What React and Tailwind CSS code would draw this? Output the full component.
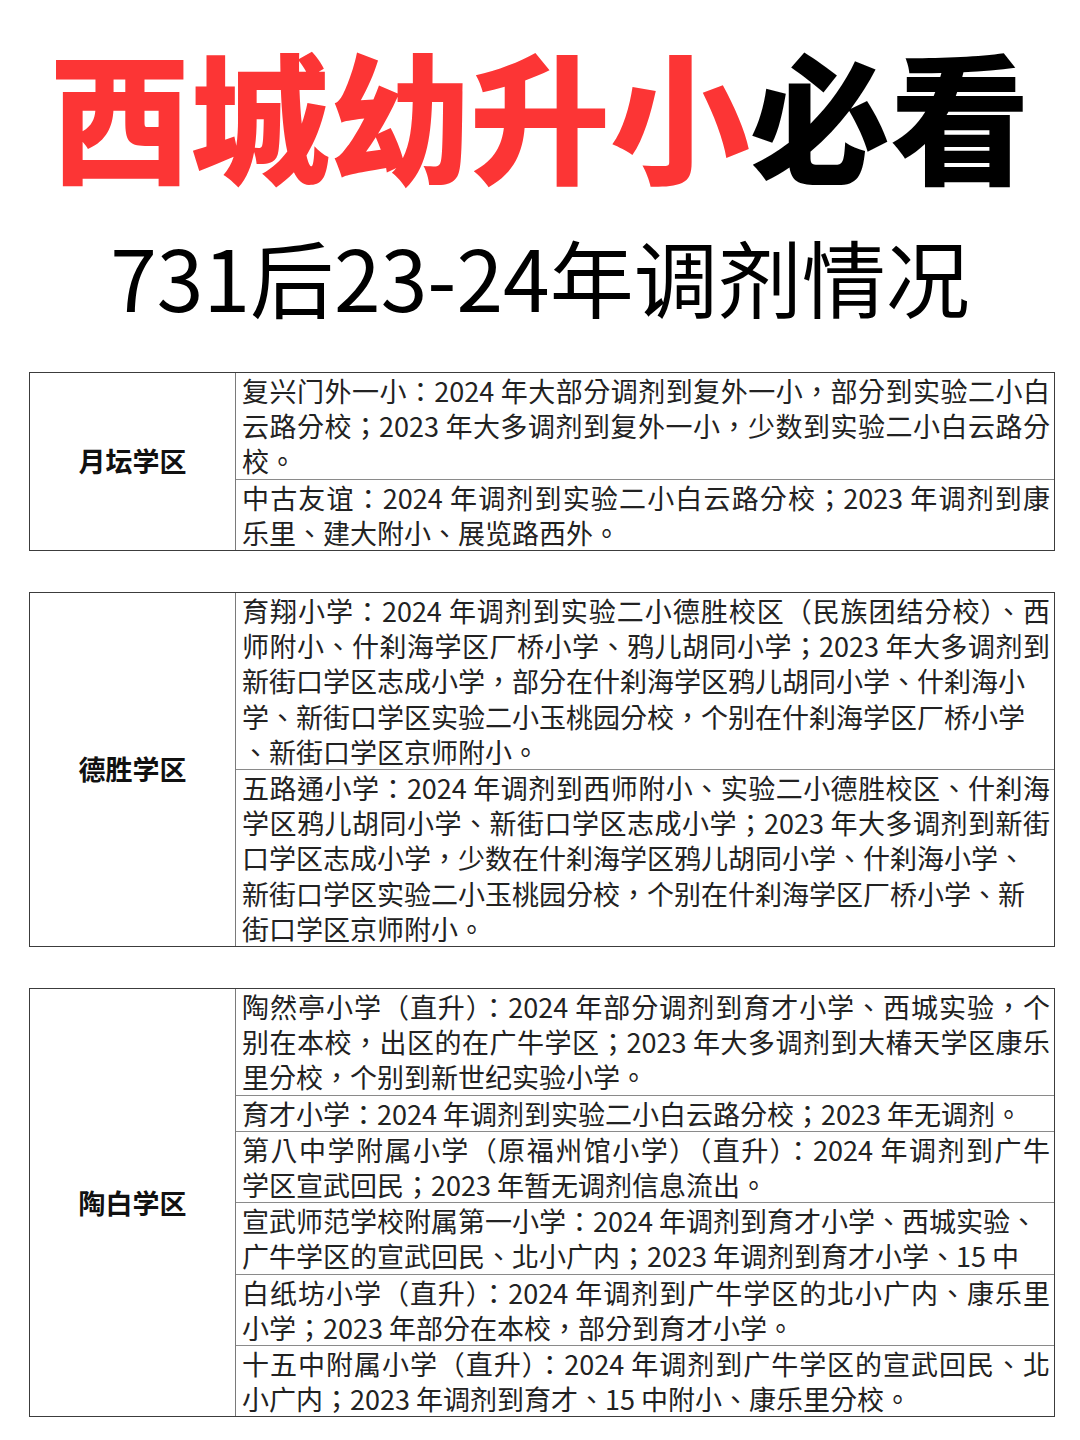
const districts = [
  {
    name: '月坛学区',
    rows: [
      [
        ['复兴门外一小：2024 年大部分调剂到复外一小，部分到实验二小白', true],
        ['云路分校；2023 年大多调剂到复外一小，少数到实验二小白云路分', true],
        ['校。', false],
      ],
      [
        ['中古友谊：2024 年调剂到实验二小白云路分校；2023 年调剂到康', true],
        ['乐里、建大附小、展览路西外。', false],
      ],
    ],
  },
  {
    name: '德胜学区',
    rows: [
      [
        ['育翔小学：2024 年调剂到实验二小德胜校区（民族团结分校）、西', true],
        ['师附小、什刹海学区厂桥小学、鸦儿胡同小学；2023 年大多调剂到', true],
        ['新街口学区志成小学，部分在什刹海学区鸦儿胡同小学、什刹海小', false],
        ['学、新街口学区实验二小玉桃园分校，个别在什刹海学区厂桥小学', false],
        ['、新街口学区京师附小。', false],
      ],
      [
        ['五路通小学：2024 年调剂到西师附小、实验二小德胜校区、什刹海', true],
        ['学区鸦儿胡同小学、新街口学区志成小学；2023 年大多调剂到新街', true],
        ['口学区志成小学，少数在什刹海学区鸦儿胡同小学、什刹海小学、', false],
        ['新街口学区实验二小玉桃园分校，个别在什刹海学区厂桥小学、新', false],
        ['街口学区京师附小。', false],
      ],
    ],
  },
  {
    name: '陶白学区',
    rows: [
      [
        ['陶然亭小学（直升）：2024 年部分调剂到育才小学、西城实验，个', true],
        ['别在本校，出区的在广牛学区；2023 年大多调剂到大椿天学区康乐', true],
        ['里分校，个别到新世纪实验小学。', false],
      ],
      [['育才小学：2024 年调剂到实验二小白云路分校；2023 年无调剂。', false]],
      [
        ['第八中学附属小学（原福州馆小学）（直升）：2024 年调剂到广牛', true],
        ['学区宣武回民；2023 年暂无调剂信息流出。', false],
      ],
      [
        ['宣武师范学校附属第一小学：2024 年调剂到育才小学、西城实验、', false],
        ['广牛学区的宣武回民、北小广内；2023 年调剂到育才小学、15 中', false],
      ],
      [
        ['白纸坊小学（直升）：2024 年调剂到广牛学区的北小广内、康乐里', true],
        ['小学；2023 年部分在本校，部分到育才小学。', false],
      ],
      [
        ['十五中附属小学（直升）：2024 年调剂到广牛学区的宣武回民、北', true],
        ['小广内；2023 年调剂到育才、15 中附小、康乐里分校。', false],
      ],
    ],
  },
]

function DistrictTable({ district }) {
  return (
    <div className="grid grid-cols-[206px_1fr] border-[1.5px] border-[#3c3c3c]">
      <div className="flex items-center justify-center border-r border-[#7a7a7a] font-['Noto_Sans_CJK_SC',sans-serif] text-[27px] font-bold text-[#111]">
        {district.name}
      </div>
      <div lang="zh-Hant" className="flex flex-col divide-y divide-[#8a8a8a]">
        {district.rows.map((lines, i) => (
          <div key={i} className="pl-[6px] pr-[4px] text-[27px] leading-[35.2px] text-[#222]">
            {lines.map(([text, full], j) =>
              full ? (
                <div key={j} className="whitespace-nowrap text-justify [text-align-last:justify]">
                  {text}
                </div>
              ) : (
                <div key={j} className="whitespace-nowrap">
                  {text}
                </div>
              )
            )}
          </div>
        ))}
      </div>
    </div>
  )
}

export default function App() {
  return (
    <div className="min-h-[1440px] w-[1080px] bg-white font-['Noto_Sans_CJK_TC','Noto_Sans_CJK_SC',sans-serif]">
      {/* Title */}
      <div className="flex flex-col items-center pt-[42px] font-['Noto_Sans_CJK_SC',sans-serif]">
        <h1 className="text-[140px] leading-none font-black whitespace-nowrap">
          <span className="text-[#fc3535]">西城幼升小</span>
          <span className="text-black">必看</span>
        </h1>
        <p className="mt-[52px] text-[84px] leading-none text-black whitespace-nowrap">
          731后23-24年调剂情况
        </p>
      </div>

      {/* Tables */}
      <div className="mt-[54px] flex flex-col gap-[41px] pl-[29px] pr-[25px]">
        {districts.map((d) => (
          <DistrictTable key={d.name} district={d} />
        ))}
      </div>
    </div>
  )
}
